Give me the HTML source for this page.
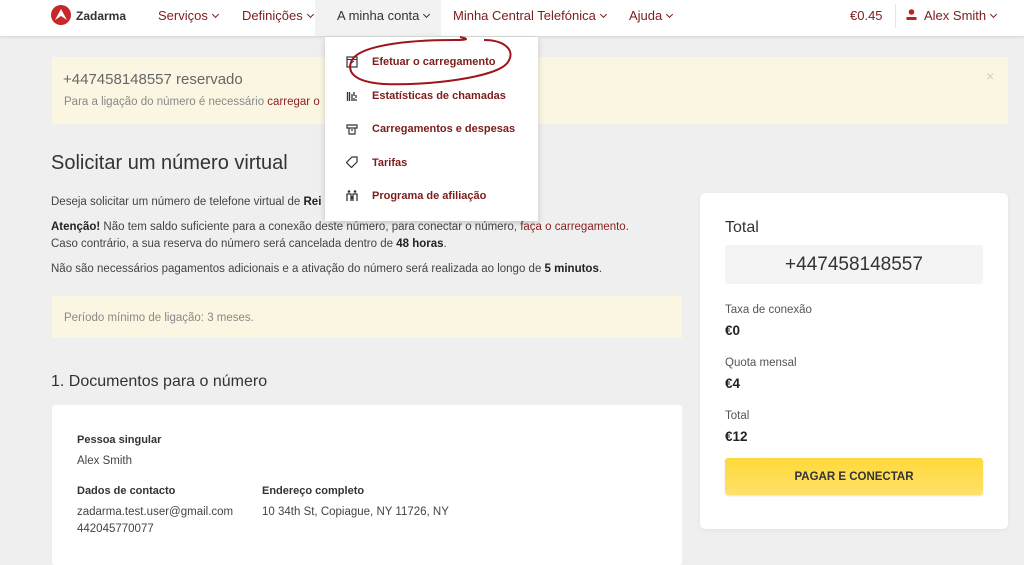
<!DOCTYPE html>
<html><head><meta charset="utf-8"><style>
*{margin:0;padding:0;box-sizing:border-box}
body{width:1024px;height:553px;overflow:hidden;background:#efefef;font-family:"Liberation Sans",sans-serif;color:#333;position:relative}
.abs{position:absolute}
.hdr{left:0;top:0;width:1024px;height:36px;background:#fff;box-shadow:0 1px 3px rgba(0,0,0,.12)}
.nav{top:8px;font-size:13px;color:#7c1c1c;white-space:nowrap}
.chev{display:inline-block;width:5px;height:5px;border-right:1.3px solid currentColor;border-bottom:1.3px solid currentColor;transform:rotate(45deg);margin:0 0 3px 5px}
.red{color:#8b1f1f}
p{font-size:11.5px;color:#444;white-space:nowrap}
b{color:#222}
.menu{left:325px;top:37px;width:213px;height:184px;background:#fff;box-shadow:0 2px 6px rgba(0,0,0,.18)}
.mi{position:absolute;left:47px;font-size:11px;font-weight:bold;color:#7c1c1c;white-space:nowrap}
.ic{position:absolute;left:21px;width:12px;height:12px}
.lbl{font-size:11.5px;color:#555}
.val{font-size:13.5px;color:#222;font-weight:bold}
</style></head><body>
<div class="abs hdr"></div>
<svg class="abs" style="left:51px;top:5px" width="20" height="20" viewBox="0 0 20 20"><circle cx="10" cy="10" r="10" fill="#c62828"/><path d="M4 15 L10 4 L16 15 L10 11 Z" fill="#fff"/></svg>
<div class="abs nav" style="left:76px;top:9px;font-size:12px;font-weight:bold;color:#333">Zadarma</div>
<div class="abs nav" style="left:158px">Serviços<span class="chev"></span></div>
<div class="abs nav" style="left:242px">Definições<span class="chev"></span></div>
<div class="abs" style="left:315px;top:0;width:126px;height:36px;background:#f2f2f2"></div>
<div class="abs nav" style="left:337px;color:#333">A minha conta<span class="chev"></span></div>
<div class="abs nav" style="left:453px">Minha Central Telefónica<span class="chev"></span></div>
<div class="abs nav" style="left:629px">Ajuda<span class="chev"></span></div>
<div class="abs nav" style="left:850px">€0.45</div>
<div class="abs" style="left:895px;top:4px;width:1px;height:24px;background:#e5e5e5"></div>
<svg class="abs" style="left:906px;top:9px" width="11" height="12" viewBox="0 0 11 12"><circle cx="5.5" cy="3" r="2.8" fill="#b22"/><rect x="0.5" y="8" width="10" height="3" fill="#b22"/></svg>
<div class="abs nav" style="left:924px">Alex Smith<span class="chev"></span></div>

<div class="abs" style="left:52px;top:57px;width:956px;height:67px;background:#fbf6e2"></div>
<div class="abs" style="left:63px;top:71px;font-size:15px;color:#666">+447458148557 reservado</div>
<p class="abs" style="left:64px;top:96px;color:#888">Para a ligação do número é necessário <span class="red">carregar o</span></p>
<div class="abs" style="left:986px;top:68px;font-size:14px;color:#ccc">×</div>

<div class="abs" style="left:51px;top:152px;font-size:20px;color:#333">Solicitar um número virtual</div>
<p class="abs" style="left:51px;top:196px">Deseja solicitar um número de telefone virtual de <b>Rei</b></p>
<p class="abs" style="left:51px;top:221px"><b>Atenção!</b> Não tem saldo suficiente para a conexão deste número, para conectar o número, <span class="red">faça o carregamento</span>.</p>
<p class="abs" style="left:51px;top:238px">Caso contrário, a sua reserva do número será cancelada dentro de <b>48 horas</b>.</p>
<p class="abs" style="left:51px;top:263px">Não são necessários pagamentos adicionais e a ativação do número será realizada ao longo de <b>5 minutos</b>.</p>
<div class="abs" style="left:52px;top:296px;width:630px;height:42px;background:#fbf6e2"></div>
<p class="abs" style="left:64px;top:312px;color:#888">Período mínimo de ligação: 3 meses.</p>
<div class="abs" style="left:51px;top:373px;font-size:16px;color:#333">1. Documentos para o número</div>
<div class="abs" style="left:52px;top:405px;width:630px;height:160px;background:#fff;border-radius:3px"></div>
<p class="abs" style="left:77px;top:434px;color:#333;font-weight:bold;font-size:11px">Pessoa singular</p>
<p class="abs" style="left:77px;top:455px">Alex Smith</p>
<p class="abs" style="left:77px;top:485px;color:#333;font-weight:bold;font-size:11px">Dados de contacto</p>
<p class="abs" style="left:262px;top:485px;color:#333;font-weight:bold;font-size:11px">Endereço completo</p>
<p class="abs" style="left:77px;top:506px">zadarma.test.user@gmail.com</p>
<p class="abs" style="left:262px;top:506px">10 34th St, Copiague, NY 11726, NY</p>
<p class="abs" style="left:77px;top:523px">442045770077</p>

<div class="abs" style="left:700px;top:193px;width:308px;height:336px;background:#fff;border-radius:5px;box-shadow:0 1px 4px rgba(0,0,0,.06)"></div>
<div class="abs" style="left:725px;top:219px;font-size:16px;color:#333">Total</div>
<div class="abs" style="left:725px;top:245px;width:258px;height:39px;background:#f4f4f4;border-radius:3px;text-align:center;line-height:39px;font-size:19px;color:#333">+447458148557</div>
<div class="abs lbl" style="left:725px;top:304px">Taxa de conexão</div>
<div class="abs val" style="left:725px;top:323px">€0</div>
<div class="abs lbl" style="left:725px;top:357px">Quota mensal</div>
<div class="abs val" style="left:725px;top:376px">€4</div>
<div class="abs lbl" style="left:725px;top:410px">Total</div>
<div class="abs val" style="left:725px;top:429px">€12</div>
<div class="abs" style="left:725px;top:458px;width:258px;height:37px;background:linear-gradient(#ffd93a,#ffe06a);border-radius:3px;text-align:center;line-height:38px;font-size:11.5px;font-weight:bold;color:#333;box-shadow:0 1px 2px rgba(0,0,0,.12)">PAGAR E CONECTAR</div>

<div class="abs menu">
<svg class="ic" style="top:19px" viewBox="0 0 12 12"><rect x="1" y="1" width="10" height="10" fill="none" stroke="#333" stroke-width="1.2"/><path d="M1 3.5H11M4 8L8 5" stroke="#333" stroke-width="1"/></svg>
<div class="mi" style="top:19px">Efetuar o carregamento</div>
<svg class="ic" style="top:53px" viewBox="0 0 12 12"><path d="M1.5 2V11M3.5 2V11M6 4V11M8 2V6M10 5V8M8 8V11M10 9V11" stroke="#333" stroke-width="1.3"/></svg>
<div class="mi" style="top:53px">Estatísticas de chamadas</div>
<svg class="ic" style="top:86px" viewBox="0 0 12 12"><path d="M1 2H11V5H1ZM3 5V11H9V5M5 7H7" fill="none" stroke="#333" stroke-width="1.2"/></svg>
<div class="mi" style="top:86px">Carregamentos e despesas</div>
<svg class="ic" style="top:119px" viewBox="0 0 12 12"><path d="M6 1H11V6L5.5 11.5L0.5 6.5Z" fill="none" stroke="#333" stroke-width="1.2"/></svg>
<div class="mi" style="top:120px">Tarifas</div>
<svg class="ic" style="top:153px" viewBox="0 0 12 12"><circle cx="3" cy="1.5" r="1.3" fill="#333"/><circle cx="9" cy="1.5" r="1.3" fill="#333"/><path d="M1 11V4H5V11M7 11V4H11V11M5 6L6 8L7 6" fill="none" stroke="#333" stroke-width="1.3"/></svg>
<div class="mi" style="top:153px">Programa de afiliação</div>
</div>
<svg class="abs" style="left:344px;top:36px" width="172" height="54" viewBox="0 0 172 54"><path d="M140 4 C 160 4, 172 14, 164 26 C 154 42, 80 50, 40 48 C 10 46, 2 36, 8 24 C 16 10, 60 4, 110 4 C 130 4, 120 2, 116 1" fill="none" stroke="#a0141b" stroke-width="2"/></svg>
</body></html>
